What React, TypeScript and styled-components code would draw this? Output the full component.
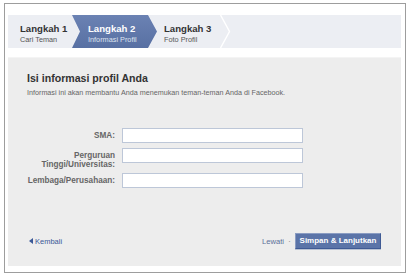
import React from "react";
import styled, { createGlobalStyle } from "styled-components";

const Global = createGlobalStyle`
  html, body { margin: 0; padding: 0; background: #ffffff; }
  body { font-family: "Liberation Sans", Arial, sans-serif; color: #333; }
  * { box-sizing: border-box; }
`;

const Page = styled.div`
  width: 411px;
  height: 277px;
  padding-top: 3px;
  overflow: hidden;
`;

const Frame = styled.div`
  margin-left: 4px;
  width: 402px;
  height: 270px;
  border: 1px solid #9d9d9d;
  padding: 11px 4px 0 3px;
  display: flex;
  flex-direction: column;
`;

const StepBar = styled.div`
  height: 33px;
  background: #eceef3;
  display: flex;
  align-items: stretch;
`;

const Step = styled.div<{ $active?: boolean; $w: number; $pl: number }>`
  width: ${(p) => p.$w}px;
  padding-left: ${(p) => p.$pl}px;
  padding-top: 8px;
  display: flex;
  flex-direction: column;
  ${(p) =>
    p.$active
      ? `background: linear-gradient(#6b82b3, #5870a3);
         clip-path: polygon(0 0, calc(100% - 9px) 0, 100% 50%, calc(100% - 9px) 100%, 0 100%, 8px 50%);`
      : ""}
`;

const StepTitle = styled.div<{ $active?: boolean }>`
  font-size: 9.6px;
  line-height: 11px;
  font-weight: bold;
  color: ${(p) => (p.$active ? "#ffffff" : "#333333")};
  white-space: nowrap;
`;

const StepSub = styled.div<{ $active?: boolean }>`
  font-size: 7.3px;
  line-height: 10px;
  margin-top: 1px;
  color: ${(p) => (p.$active ? "#dde3ef" : "#555555")};
  white-space: nowrap;
`;

const Chevron = styled.svg`
  width: 11px;
  height: 33px;
  display: block;
`;

const Panel = styled.div`
  margin-top: 9px;
  height: 209px;
  background: #ededed;
  border-top: 1px solid #f4f4f4;
  padding: 14px 20px 0 19px;
  display: flex;
  flex-direction: column;
`;

const Heading = styled.h2`
  margin: 0;
  font-size: 10.6px;
  line-height: 13px;
  font-weight: bold;
  color: #333333;
`;

const Intro = styled.p`
  margin: 3px 0 0;
  font-size: 7.2px;
  line-height: 10px;
  color: #666666;
`;

const Form = styled.div`
  margin-top: 30px;
  margin-left: -11px;
  display: grid;
  grid-template-columns: 99px 181px;
  column-gap: 7px;
  row-gap: 4px;
  align-items: start;
`;

const Label = styled.label<{ $two?: boolean }>`
  text-align: right;
  font-size: 8.2px;
  line-height: ${(p) => (p.$two ? "9px" : "15px")};
  padding-top: ${(p) => (p.$two ? "3px" : "0")};
  font-weight: bold;
  color: #666666;
  white-space: nowrap;
`;

const Input = styled.input<{ $mb?: number }>`
  width: 181px;
  height: 15px;
  margin: 0 0 ${(p) => p.$mb ?? 0}px;
  padding: 0 2px;
  border: 1px solid #bdc7d8;
  background: #ffffff;
  font-family: inherit;
  font-size: 8px;
  outline: none;
`;

const Footer = styled.div`
  margin-top: auto;
  margin-bottom: 17px;
  display: flex;
  align-items: center;
  justify-content: space-between;
`;

const Back = styled.a`
  margin-left: 2px;
  display: flex;
  align-items: center;
  gap: 2px;
  font-size: 7.5px;
  color: #3b5998;
  text-decoration: none;
`;

const Actions = styled.div`
  display: flex;
  align-items: center;
`;

const Skip = styled.a`
  font-size: 7.6px;
  color: #5c6f99;
  text-decoration: none;
`;

const Dot = styled.span`
  margin: 0 4px 0 4px;
  font-size: 9px;
  line-height: 9px;
  color: #999999;
`;

const Primary = styled.button`
  width: 86px;
  height: 16px;
  padding: 0;
  border: 1px solid #3f5a94;
  border-top-color: #8a9cc2;
  border-left-color: #8a9cc2;
  background: #5b74a8;
  box-shadow: 0 1px 0 #b9c2d3;
  color: #ffffff;
  font-family: inherit;
  font-size: 8px;
  font-weight: bold;
  line-height: 14px;
`;

export default function App() {
  return (
    <Page>
      <Global />
      <Frame>
        <StepBar>
          <Step $w={64} $pl={12}>
            <StepTitle>Langkah 1</StepTitle>
            <StepSub>Cari Teman</StepSub>
          </Step>
          <Step $active $w={85} $pl={16}>
            <StepTitle $active>Langkah 2</StepTitle>
            <StepSub $active>Informasi Profil</StepSub>
          </Step>
          <Step $w={63} $pl={7}>
            <StepTitle>Langkah 3</StepTitle>
            <StepSub>Foto Profil</StepSub>
          </Step>
          <Chevron viewBox="0 0 11 33">
            <polyline points="0.5,0 9.5,16.5 0.5,33" fill="none" stroke="#ffffff" strokeWidth="1.4" />
          </Chevron>
        </StepBar>
        <Panel>
          <Heading>Isi informasi profil Anda</Heading>
          <Intro>Informasi ini akan membantu Anda menemukan teman-teman Anda di Facebook.</Intro>
          <Form>
            <Label $two={false}>SMA:</Label>
            <Input $mb={1} />
            <Label $two>
              Perguruan
              <br />
              Tinggi/Universitas:
            </Label>
            <Input $mb={2} />
            <Label>Lembaga/Perusahaan:</Label>
            <Input />
          </Form>
          <Footer>
            <Back href="#">
              <svg width="4" height="6" viewBox="0 0 4 6">
                <polygon points="4,0 0,3 4,6" fill="#3b5998" />
              </svg>
              Kembali
            </Back>
            <Actions>
              <Skip href="#">Lewati</Skip>
              <Dot>·</Dot>
              <Primary>Simpan &amp; Lanjutkan</Primary>
            </Actions>
          </Footer>
        </Panel>
      </Frame>
    </Page>
  );
}
